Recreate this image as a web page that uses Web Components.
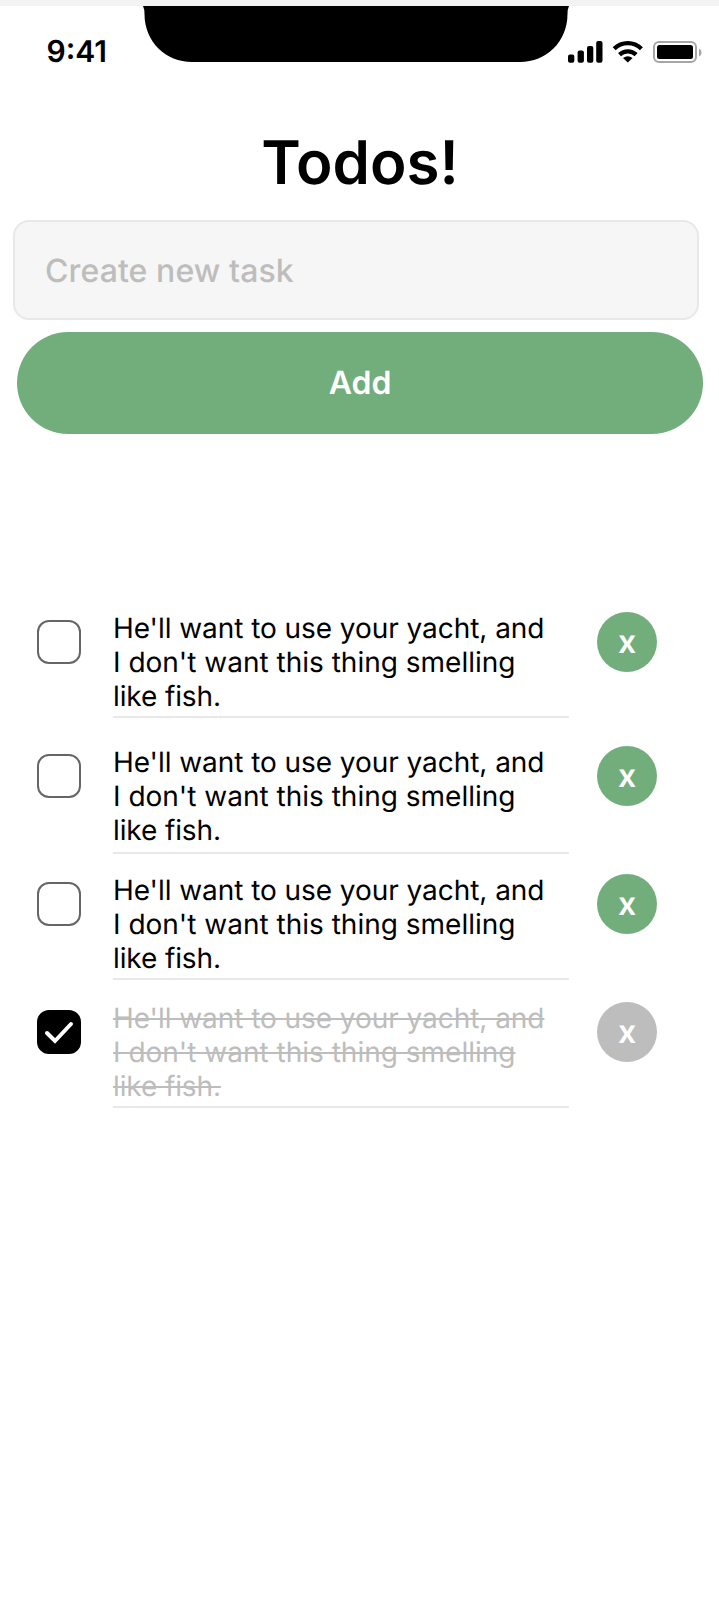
<!DOCTYPE html>
<html lang="en">
<head>
<meta charset="utf-8">
<title>Todos</title>
<style>
html,body{margin:0;padding:0;background:#fff;}
body{font-family:Inter,"Liberation Sans",sans-serif;color:#000;text-rendering:geometricPrecision;}
</style>
</head>
<body>
<todo-app></todo-app>
<script>
const define = (name, html, setup) => customElements.define(name, class extends HTMLElement {
  constructor() {
    super();
    const t = document.createElement('template');
    t.innerHTML = html;
    this.attachShadow({mode: 'open'}).append(t.content.cloneNode(true));
  }
  connectedCallback() { if (setup) setup(this); }
});

define('status-bar', `
<style>
:host{display:grid;grid-template-columns:143px 426px 1fr;height:56px;border-top:6px solid #f3f3f3}
.time{padding:28px 0 0 46.500px;font-size:30px;line-height:36px;font-weight:600}
svg{display:block}
.icons{display:flex;height:22px;margin-top:35px;margin-left:-1px}
</style>
<div class="time">9:41</div>
<svg width="426" height="56" viewBox="0 0 426 56"><path d="M0 0H426Q424.500 3 424.500 8C424.500 36 403 56 377 56H49C23 56 1.500 36 1.500 8Q1.500 3 0 0Z"/></svg>
<div class="icons">
<svg width="134" height="22" viewBox="0 0 134 22">
<rect x="0" y="13.500" width="6.300" height="8.300" rx="2"/><rect x="9.600" y="9.500" width="6.300" height="12.300" rx="2"/><rect x="19" y="5" width="6.300" height="16.800" rx="2"/><rect x="28.200" y="0" width="6.300" height="21.800" rx="2"/>
<g fill="none" stroke="#000" stroke-width="4.300"><path d="M46.200 7.700a19.500 19.500 0 0 1 27.200 0"/><path d="M51.500 13.600a12.300 12.300 0 0 1 16.600 0"/></g>
<path d="M59.800 21.500l-4.800-4.600q4.800-3.400 9.600 0z"/>
<rect x="86" y="1" width="42" height="20" rx="5" fill="none" stroke="#a6a6a6" stroke-width="2"/><rect x="89" y="4" width="36" height="14" rx="2.500"/><path d="M131 7.500v8q2.600-1.500 2.600-4t-2.600-4z" fill="#a6a6a6"/>
</svg></div>`);

define('task-field', `
<style>:host{display:flex;align-items:center;box-sizing:border-box;height:100px;border:2px solid #e8e8e8;border-radius:16px;background:#f6f6f6;color:#bdbdbd;padding:2px 0 0 30px;font-size:32px;font-weight:500;letter-spacing:.1px;line-height:40px}</style><slot></slot>`);

define('pill-button', `
<style>:host{display:block}button{display:block;width:100%;height:102px;border:0;border-radius:51px;background:#72ae7b;color:#fff;font:600 32px/40px Inter,"Liberation Sans",sans-serif;text-rendering:inherit;padding:0}</style><button><slot></slot></button>`);

define('check-box', `
<style>:host{display:block;box-sizing:border-box;width:44px;height:44px;border:2px solid #666;border-radius:12px}
svg{display:none}:host([checked]){background:#000;border-color:#000}:host([checked]) svg{display:block}</style>
<svg width="40" height="40" viewBox="0 0 40 40" fill="none" stroke="#fff" stroke-width="4" stroke-linecap="round"><path d="M8 21l8 8L32 12"/></svg>`);

define('remove-button', `
<style>:host{display:block}button{display:block;width:60px;height:60px;border:0;border-radius:50%;background:var(--accent,#72ae7b);color:#fff;font:600 32px/40px Inter,"Liberation Sans",sans-serif;text-rendering:inherit;padding:0}</style><button>x</button>`);

define('todo-item', `
<style>
:host{display:grid;grid-template-columns:44px 32px 456px 28px 60px;align-items:start;height:var(--pitch,128px)}
check-box{grid-column:1;margin-top:8px}
.text{grid-column:3;margin-top:-1px;box-sizing:border-box;height:var(--body,107px);border-bottom:2px solid #e8e8e8;font-size:28px;line-height:34px;white-space:nowrap}
.text::first-line{letter-spacing:-.055px}
remove-button{grid-column:5}
:host([done]) .text{color:#bdbdbd}
:host([done]) .copy{text-decoration:line-through}
:host([done]) remove-button{--accent:#bdbdbd}
</style>
<check-box></check-box><div class="text"><span class="copy"><slot></slot></span></div><remove-button></remove-button>`,
el => el.shadowRoot.querySelector('check-box').toggleAttribute('checked', el.hasAttribute('done')));

define('todo-app', `
<style>
:host{display:block;height:1614px;overflow:hidden}
h1{margin:65px 0 0;padding-left:1px;text-align:center;font-size:60px;line-height:72px;font-weight:600}
task-field{margin:21px 20px 0 13px}
pill-button{margin:12px 16px 0 17px}
.list{display:flex;flex-direction:column;margin:178px 0 0 37px}
.first{--pitch:134px}.second{--body:109px}
.end{letter-spacing:-.12px}
</style>
<status-bar></status-bar>
<h1>Todos!</h1>
<task-field>Create new task</task-field>
<pill-button>Add</pill-button>
<div class="list">
<todo-item class="first">He'll want to use your yacht, and<br>I don't want this thing smelling<br><span class="end">like fish.</span></todo-item>
<todo-item class="second">He'll want to use your yacht, and<br>I don't want this thing smelling<br><span class="end">like fish.</span></todo-item>
<todo-item>He'll want to use your yacht, and<br>I don't want this thing smelling<br><span class="end">like fish.</span></todo-item>
<todo-item done>He'll want to use your yacht, and<br>I don't want this thing smelling<br><span class="end">like fish.</span></todo-item>
</div>`);
</script>
</body>
</html>
